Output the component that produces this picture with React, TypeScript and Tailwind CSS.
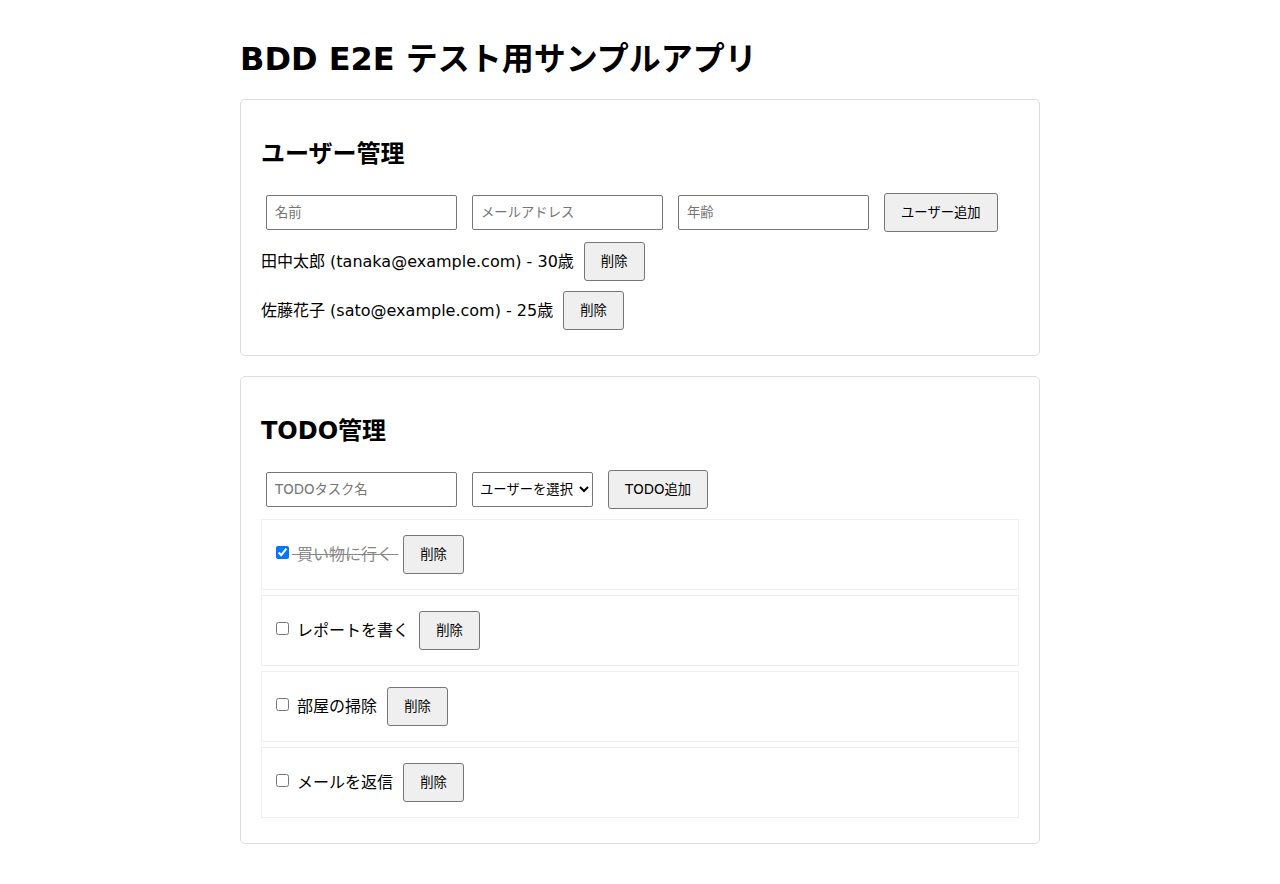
import { useState } from 'react'

interface User {
  id: number
  name: string
  email: string
  age: number
}

interface Todo {
  id: number
  title: string
  done: boolean
}

const USERS: User[] = [
  { id: 1, name: '田中太郎', email: 'tanaka@example.com', age: 30 },
  { id: 2, name: '佐藤花子', email: 'sato@example.com', age: 25 },
]

const TODOS: Todo[] = [
  { id: 1, title: '買い物に行く', done: true },
  { id: 2, title: 'レポートを書く', done: false },
  { id: 3, title: '部屋の掃除', done: false },
  { id: 4, title: 'メールを返信', done: false },
]

const FONT = 'font-["DejaVu_Sans","Noto_Sans_CJK_JP",sans-serif]'
const INPUT_CLS =
  'w-[191px] h-[35px] px-2 bg-white border border-[#767676] rounded-[2px] text-[13.33px] text-black placeholder:text-[#757575] outline-none'
const BTN_CLS =
  'h-[39px] px-4 bg-[#efefef] border border-[#767676] rounded-[3px] text-[13.33px] text-black cursor-pointer whitespace-nowrap'

function UserSection() {
  const [users, setUsers] = useState(USERS)

  return (
    <div className="border border-[#ddd] rounded-[5px] p-5 mb-5">
      <h2 className="text-2xl font-bold leading-[28px] my-5">ユーザー管理</h2>
      <div className="flex items-center gap-[15px] px-[5px] h-[49px]">
        <input className={INPUT_CLS} placeholder="名前" />
        <input className={INPUT_CLS} placeholder="メールアドレス" />
        <input className={INPUT_CLS} placeholder="年齢" />
        <button type="button" className={BTN_CLS}>
          ユーザー追加
        </button>
      </div>
      {users.map((u) => (
        <div key={u.id} className="flex items-center h-[49px]">
          <span>
            {u.name} ({u.email}) - {u.age}歳
          </span>
          <button
            type="button"
            className={`${BTN_CLS} ml-[10px]`}
            onClick={() => setUsers(users.filter((x) => x.id !== u.id))}
          >
            削除
          </button>
        </div>
      ))}
    </div>
  )
}

function TodoSection() {
  const [todos, setTodos] = useState(TODOS)

  function toggle(id: number) {
    setTodos(todos.map((t) => (t.id === id ? { ...t, done: !t.done } : t)))
  }

  return (
    <div className="border border-[#ddd] rounded-[5px] p-5">
      <h2 className="text-2xl font-bold leading-[28px] my-5">TODO管理</h2>
      <div className="flex items-center gap-[15px] px-[5px] h-[49px]">
        <input className={INPUT_CLS} placeholder="TODOタスク名" />
        <select className="h-[35px] pl-[3px] pr-[2px] bg-white border border-[#767676] rounded-[2px] text-[13.33px] text-black">
          <option>ユーザーを選択</option>
          <option>田中太郎</option>
          <option>佐藤花子</option>
        </select>
        <button type="button" className={`${BTN_CLS} px-[16px]`}>
          TODO追加
        </button>
      </div>
      <div>
        {todos.map((t, i) => (
          <div key={t.id} className="border border-[#eee] p-[10px] my-[5px]">
            <div className="flex items-center h-[49px]">
              <input
                type="checkbox"
                checked={t.done}
                onChange={() => toggle(t.id)}
                className="w-[13px] h-[13px] ml-[4px] mr-[3px] -mt-[4px]"
              />
              {t.done ? (
                <span className="line-through text-[#888]">
                  {'\u00a0' + t.title + '\u00a0'}
                </span>
              ) : (
                <span>{'\u00a0' + t.title + '\u00a0'}</span>
              )}
              <button
                type="button"
                className={`${BTN_CLS} ml-[5px] ${i === 2 ? 'bg-[#e5e5e5]' : ''}`}
                onClick={() => setTodos(todos.filter((x) => x.id !== t.id))}
              >
                削除
              </button>
            </div>
          </div>
        ))}
      </div>
    </div>
  )
}

export default function App() {
  return (
    <div className={`${FONT} bg-white text-black min-h-[884px] text-base`}>
      <div className="w-[800px] mx-auto pt-5 pb-5">
        <h1 className="text-[32px] font-bold leading-[37px] my-[21px]">
          BDD E2E テスト用サンプルアプリ
        </h1>
        <UserSection />
        <TodoSection />
      </div>
    </div>
  )
}
